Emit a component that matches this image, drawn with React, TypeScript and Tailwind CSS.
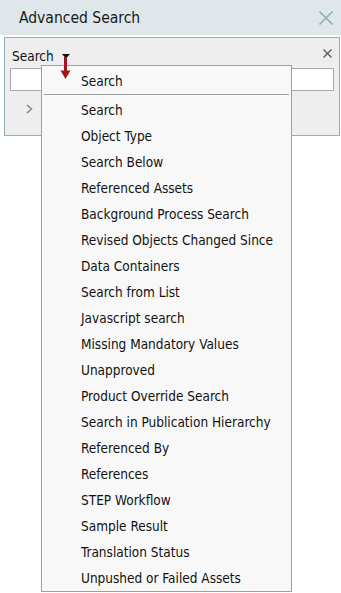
import React from "react";

const items = [
  "Search",
  "Object Type",
  "Search Below",
  "Referenced Assets",
  "Background Process Search",
  "Revised Objects Changed Since",
  "Data Containers",
  "Search from List",
  "Javascript search",
  "Missing Mandatory Values",
  "Unapproved",
  "Product Override Search",
  "Search in Publication Hierarchy",
  "Referenced By",
  "References",
  "STEP Workflow",
  "Sample Result",
  "Translation Status",
  "Unpushed or Failed Assets",
];

export default function App() {
  return (
    <div
      className="relative w-[341px] h-[593px] overflow-hidden bg-white text-[#111]"
      style={{ fontFamily: '"DejaVu Sans Condensed", "DejaVu Sans", sans-serif' }}
    >
      {/* Header */}
      <div className="h-[35px] bg-[#dfe7eb] flex items-center justify-between pl-[19px] pr-[7px]">
        <span className="text-[15.5px] text-[#1a1a1a] pt-[2px]">Advanced Search</span>
        <svg width="16" height="16" viewBox="0 0 16 16" className="mt-[1px]">
          <path d="M1.5 1.5 L14.5 14.5 M14.5 1.5 L1.5 14.5" stroke="#8fb0b8" strokeWidth="1.7" />
        </svg>
      </div>
      {/* Panel */}
      <div className="mt-[2px] ml-[4px] w-[336px] h-[99px] border border-[#8fb0b8] bg-[#eeeeee] flex flex-col">
        <div className="flex items-center justify-between pl-[7px] pr-[7px] pt-[8px] h-[28px]">
          <div className="flex items-center">
            <span className="text-[13.5px]">Search</span>
            <svg width="8" height="5" viewBox="0 0 8 5" className="ml-[8px] mt-[1px]">
              <path d="M0 0 L8 0 L4 4.5 Z" fill="#111" />
            </svg>
          </div>
          <svg width="9" height="9" viewBox="0 0 9 9" className="-mt-[6px]">
            <path d="M0.5 0.5 L8.5 8.5 M8.5 0.5 L0.5 8.5" stroke="#555" strokeWidth="1.2" />
          </svg>
        </div>
        <div className="mx-[5px] mt-[2px] h-[23px] border border-[#a9a9a9] bg-white" />
        <div className="pl-[21px] pt-[13px]">
          <svg width="7" height="10" viewBox="0 0 7 10">
            <path d="M1 1 L5.5 5 L1 9" stroke="#888" strokeWidth="1.6" fill="none" />
          </svg>
        </div>
      </div>

      {/* Dropdown menu */}
      <div className="absolute left-[41px] top-[65px] w-[251px] h-[527px] border border-[#a0a0a0] bg-[#f8f8f8] flex flex-col text-[13.5px]">
        <div className="h-[28px] flex items-center pl-[39px] pt-[3px]">Search</div>
        <div className="mx-[2px] h-px bg-[#a0a0a0]" />
        <div className="pt-[2px]">
          {items.map((t) => (
            <div key={t} className="h-[26px] flex items-center pl-[39px] whitespace-nowrap">
              {t}
            </div>
          ))}
        </div>
      </div>

      {/* Red arrow */}
      <svg className="absolute left-[60px] top-[57px]" width="11" height="22" viewBox="0 0 11 22">
        <path d="M4 0 L7 0 L7 13.5 L10.5 13.5 L5.5 22 L0.5 13.5 L4 13.5 Z" fill="#a3141c" />
      </svg>
    </div>
  );
}
